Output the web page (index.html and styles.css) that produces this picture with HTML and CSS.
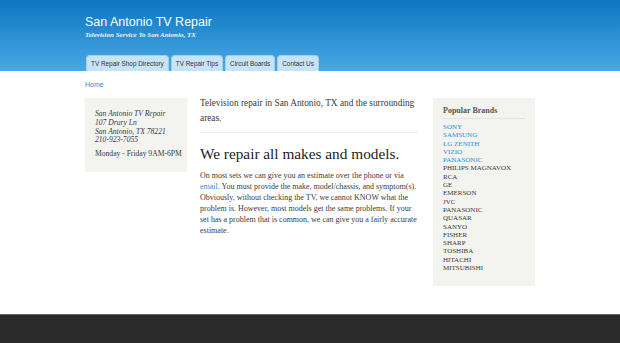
FILE: index.html
```html
<!DOCTYPE html>
<html lang="en">
<head>
  <meta charset="UTF-8" />
  <title>San Antonio TV Repair</title>
  <link rel="stylesheet" href="styles.css">
</head>
<body>
  <div class="header">
    <div class="wrap">
      <div class="site-name">San Antonio TV Repair</div>
      <div class="slogan">Television Service To San Antonio, TX</div>
      <div class="tabs">
        <a class="tab" href="#">TV Repair Shop Directory</a>
        <a class="tab" href="#">TV Repair Tips</a>
        <a class="tab" href="#">Circuit Boards</a>
        <a class="tab" href="#">Contact Us</a>
      </div>
    </div>
  </div>

  <div class="wrap">
    <div class="crumbs"><a href="#">Home</a></div>
    <div class="columns">
      <!-- left: address -->
      <div class="side left">
        <div class="addr">
          San Antonio TV Repair<br>
          107 Drury Ln<br>
          San Antonio, TX 78221<br>
          210-923-7055
        </div>
        <div class="hours">Monday - Friday 9AM-6PM</div>
      </div>

      <!-- middle -->
      <div class="main">
        <p class="intro">Television repair in San Antonio, TX and the surrounding areas.</p>
        <h1>We repair all makes and models.</h1>
        <p class="body-text">On most sets we can give you an estimate over the phone or via <a href="#">email</a>. You must provide the make, model/chassis, and symptom(s). Obviously, without checking the TV, we cannot KNOW what the problem is. However, most models get the same problems. If your set has a problem that is common, we can give you a fairly accurate estimate.</p>
      </div>

      <!-- right: brands -->
      <div class="side right">
        <h2>Popular Brands</h2>
        <ul class="brands">
          <li><a href="#">SONY</a></li>
          <li><a href="#">SAMSUNG</a></li>
          <li><a href="#">LG ZENITH</a></li>
          <li><a href="#">VIZIO</a></li>
          <li><a href="#">PANASONIC</a></li>
          <li>PHILIPS MAGNAVOX</li>
          <li>RCA</li>
          <li>GE</li>
          <li>EMERSON</li>
          <li>JVC</li>
          <li>PANASONIC</li>
          <li>QUASAR</li>
          <li>SANYO</li>
          <li>FISHER</li>
          <li>SHARP</li>
          <li>TOSHIBA</li>
          <li>HITACHI</li>
          <li>MITSUBISHI</li>
        </ul>
      </div>
    </div>
  </div>

  <div class="footer"></div>
</body>
</html>
```

FILE: styles.css
```css
body {
  margin: 0;
  background: #fff;
  color: #3b3b3b;
  font-family: 'Liberation Serif', Georgia, serif;
}

a {
  color: #2a8fd6;
  text-decoration: none;
}

.wrap {
  width: 450px;
  margin: 0 auto;
  padding: 0 85px;
}

.header {
  height: 71px;
  background: linear-gradient(#0c76c2, #4aa9e4);
}

.header .wrap {
  padding-top: 14px;
  height: 57px;
  display: flex;
  flex-direction: column;
}

.site-name {
  font-family: 'Liberation Sans', Arial, sans-serif;
  font-size: 12.5px;
  color: #fff;
  line-height: 16px;
}

.slogan {
  margin-top: 1px;
  font-size: 7px;
  font-style: italic;
  font-weight: bold;
  color: #e8f3fb;
  line-height: 9px;
}

.tabs {
  margin-top: auto;
  display: flex;
  gap: 2px;
  padding-left: 1px;
}

.tab {
  height: 15px;
  line-height: 16px;
  padding: 0 4px;
  background: #c8e3f6;
  border: 1px solid #a3cdec;
  border-bottom: none;
  border-radius: 4px 4px 0 0;
  font-family: 'Liberation Sans', Arial, sans-serif;
  font-size: 6.4px;
  color: #333;
}

.crumbs {
  font-family: 'Liberation Sans', Arial, sans-serif;
  font-size: 7px;
  margin-top: 10px;
  height: 17px;
}

.columns {
  display: flex;
  align-items: flex-start;
  gap: 13px;
}

.side {
  background: #f3f3ef;
  box-sizing: border-box;
  width: 102px;
}

.left {
  padding: 12px 4px 13px 10px;
  font-size: 7.6px;
  line-height: 8.8px;
}

.addr {
  font-style: italic;
}

.hours {
  margin-top: 5px;
}

.main {
  width: 218px;
  margin-top: -2px;
}

.intro {
  margin: 0;
  font-size: 9.3px;
  line-height: 15px;
  padding-bottom: 6px;
  border-bottom: 1px solid #eee;
}

h1 {
  margin: 8px 0 0;
  font-size: 15.3px;
  font-weight: normal;
  color: #222;
  line-height: 26px;
}

.body-text {
  margin: 3px 0 0;
  font-size: 8px;
  line-height: 11px;
}

.right {
  margin-left: 2px;
  padding: 8px 10px 14px;
}

h2 {
  margin: 0;
  font-size: 8px;
  font-weight: bold;
  color: #555;
  padding-bottom: 3px;
  border-bottom: 1px solid #e5e5e0;
}

.brands {
  list-style: none;
  margin: 4px 0 0;
  padding: 0;
  font-size: 7px;
  line-height: 8.3px;
  color: #3a3a3a;
}

.footer {
  position: fixed;
  left: 0;
  right: 0;
  bottom: 0;
  height: 28px;
  background: #2a2a2a;
  border-top: 1px solid #666;
}
```
